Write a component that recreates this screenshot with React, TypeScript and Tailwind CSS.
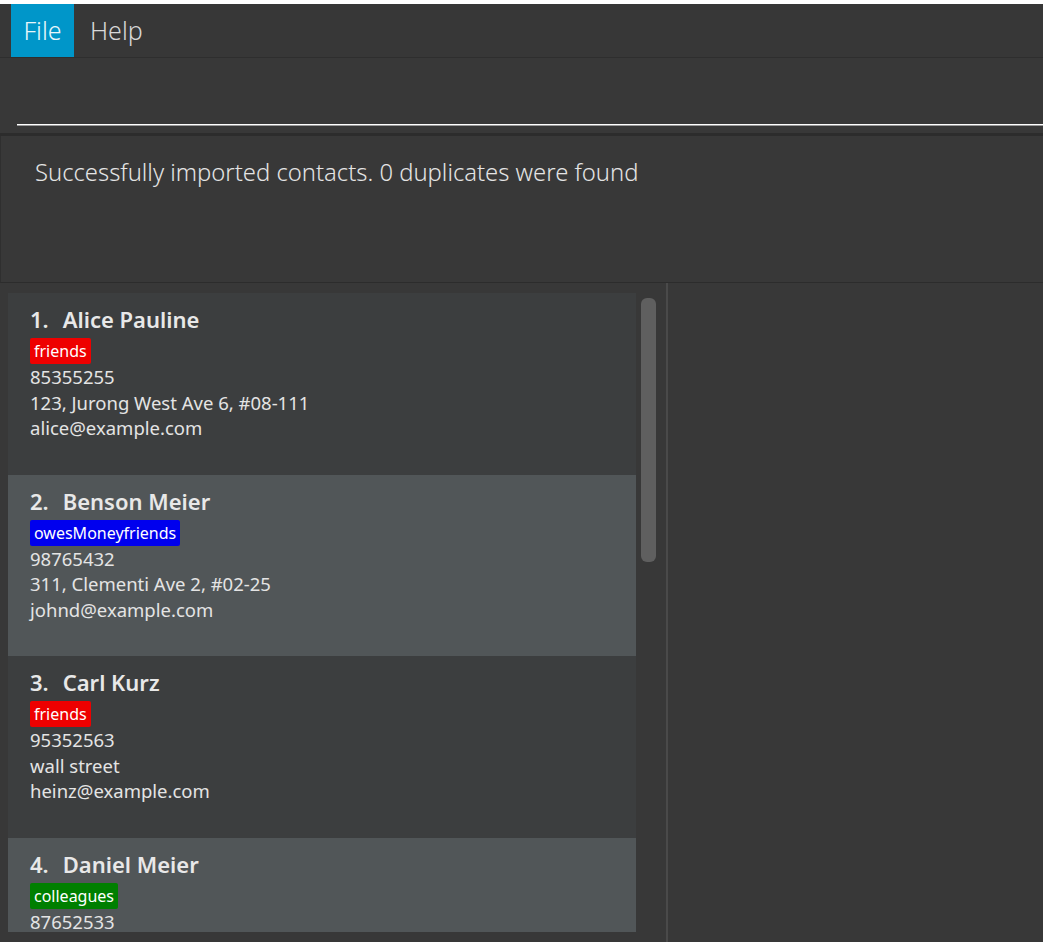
import { clsx } from 'clsx'

interface Person {
  name: string
  tag: string
  tagColor: string
  phone: string
  address?: string
  email?: string
}

const people: Person[] = [
  {
    name: 'Alice Pauline',
    tag: 'friends',
    tagColor: 'bg-[#ee0000]',
    phone: '85355255',
    address: '123, Jurong West Ave 6, #08-111',
    email: 'alice@example.com',
  },
  {
    name: 'Benson Meier',
    tag: 'owesMoneyfriends',
    tagColor: 'bg-[#0000ee]',
    phone: '98765432',
    address: '311, Clementi Ave 2, #02-25',
    email: 'johnd@example.com',
  },
  {
    name: 'Carl Kurz',
    tag: 'friends',
    tagColor: 'bg-[#ee0000]',
    phone: '95352563',
    address: 'wall street',
    email: 'heinz@example.com',
  },
  {
    name: 'Daniel Meier',
    tag: 'colleagues',
    tagColor: 'bg-[#007f00]',
    phone: '87652533',
  },
]

function PersonCard({ person, index }: { person: Person; index: number }) {
  return (
    <div
      className={clsx(
        'shrink-0 h-[181.5px] pl-[22px] pt-[11px]',
        index % 2 === 0 ? 'bg-[#3c3e3f]' : 'bg-[#515658]',
      )}
    >
      <div className="text-[22px] leading-[30px] font-semibold text-[#e8e8e8]">
        {index + 1}.<span className="inline-block w-[14px]" />
        {person.name}
      </div>
      <div className="mt-[4px] flex">
        <span
          className={clsx(
            'rounded-[2px] px-[4px] h-[26px] leading-[26px] text-[16px] text-white',
            person.tagColor,
          )}
        >
          {person.tag}
        </span>
      </div>
      <div className="text-[18.5px] leading-[25.5px] text-[#e4e4e4]">
        <div>{person.phone}</div>
        {person.address && <div>{person.address}</div>}
        {person.email && <div>{person.email}</div>}
      </div>
    </div>
  )
}

export default function App() {
  return (
    <div
      className="h-[942px] w-full overflow-hidden bg-[#383838] flex flex-col"
      style={{ fontFamily: '"Noto Sans", "Open Sans", sans-serif' }}
    >
      <div className="h-[4px] shrink-0 bg-white" />
      {/* menu bar */}
      <div className="h-[54px] shrink-0 flex items-stretch pl-[11px] bg-[#373737] border-b border-[#2e2e2e]">
        <div className="w-[63px] flex items-center justify-center bg-[#0096c9] text-[25px] font-light text-[#e8f6fb]">
          File
        </div>
        <div className="px-[16px] flex items-center text-[25px] font-light text-[#d8d8d8]">
          Help
        </div>
      </div>
      {/* command box */}
      <div className="h-[75px] shrink-0 flex flex-col justify-end pl-[17px] pb-[7px] bg-[#383838]">
        <div className="h-[2px] bg-white border-b border-[#9a9a9a]" />
      </div>
      <div className="h-[3px] shrink-0 bg-[#2c2c2c]" />
      {/* result display */}
      <div className="h-[147px] shrink-0 border-l border-[#2f2f2f] border-b border-b-[#2c2c2c] px-[34px] pt-[19px] text-[23.8px] font-light text-[#e4e4e4]">
        Successfully imported contacts. 0 duplicates were found
      </div>
      {/* main area */}
      <div className="flex-1 min-h-0 flex">
        <div className="w-[666px] shrink-0 flex pt-[10px] pl-[8px] pb-[10px] bg-[#383838]">
          <div className="w-[628px] flex flex-col overflow-hidden">
            {people.map((p, i) => (
              <PersonCard key={p.name} person={p} index={i} />
            ))}
          </div>
          <div className="flex-1 pt-[5px] pl-[5px]">
            <div className="w-[15px] h-[264px] rounded-[6px] bg-[#5f5f5f]" />
          </div>
        </div>
        <div className="w-[2px] shrink-0 bg-[#4a4a4a]" />
        <div className="flex-1 bg-[#383838]" />
      </div>
    </div>
  )
}
